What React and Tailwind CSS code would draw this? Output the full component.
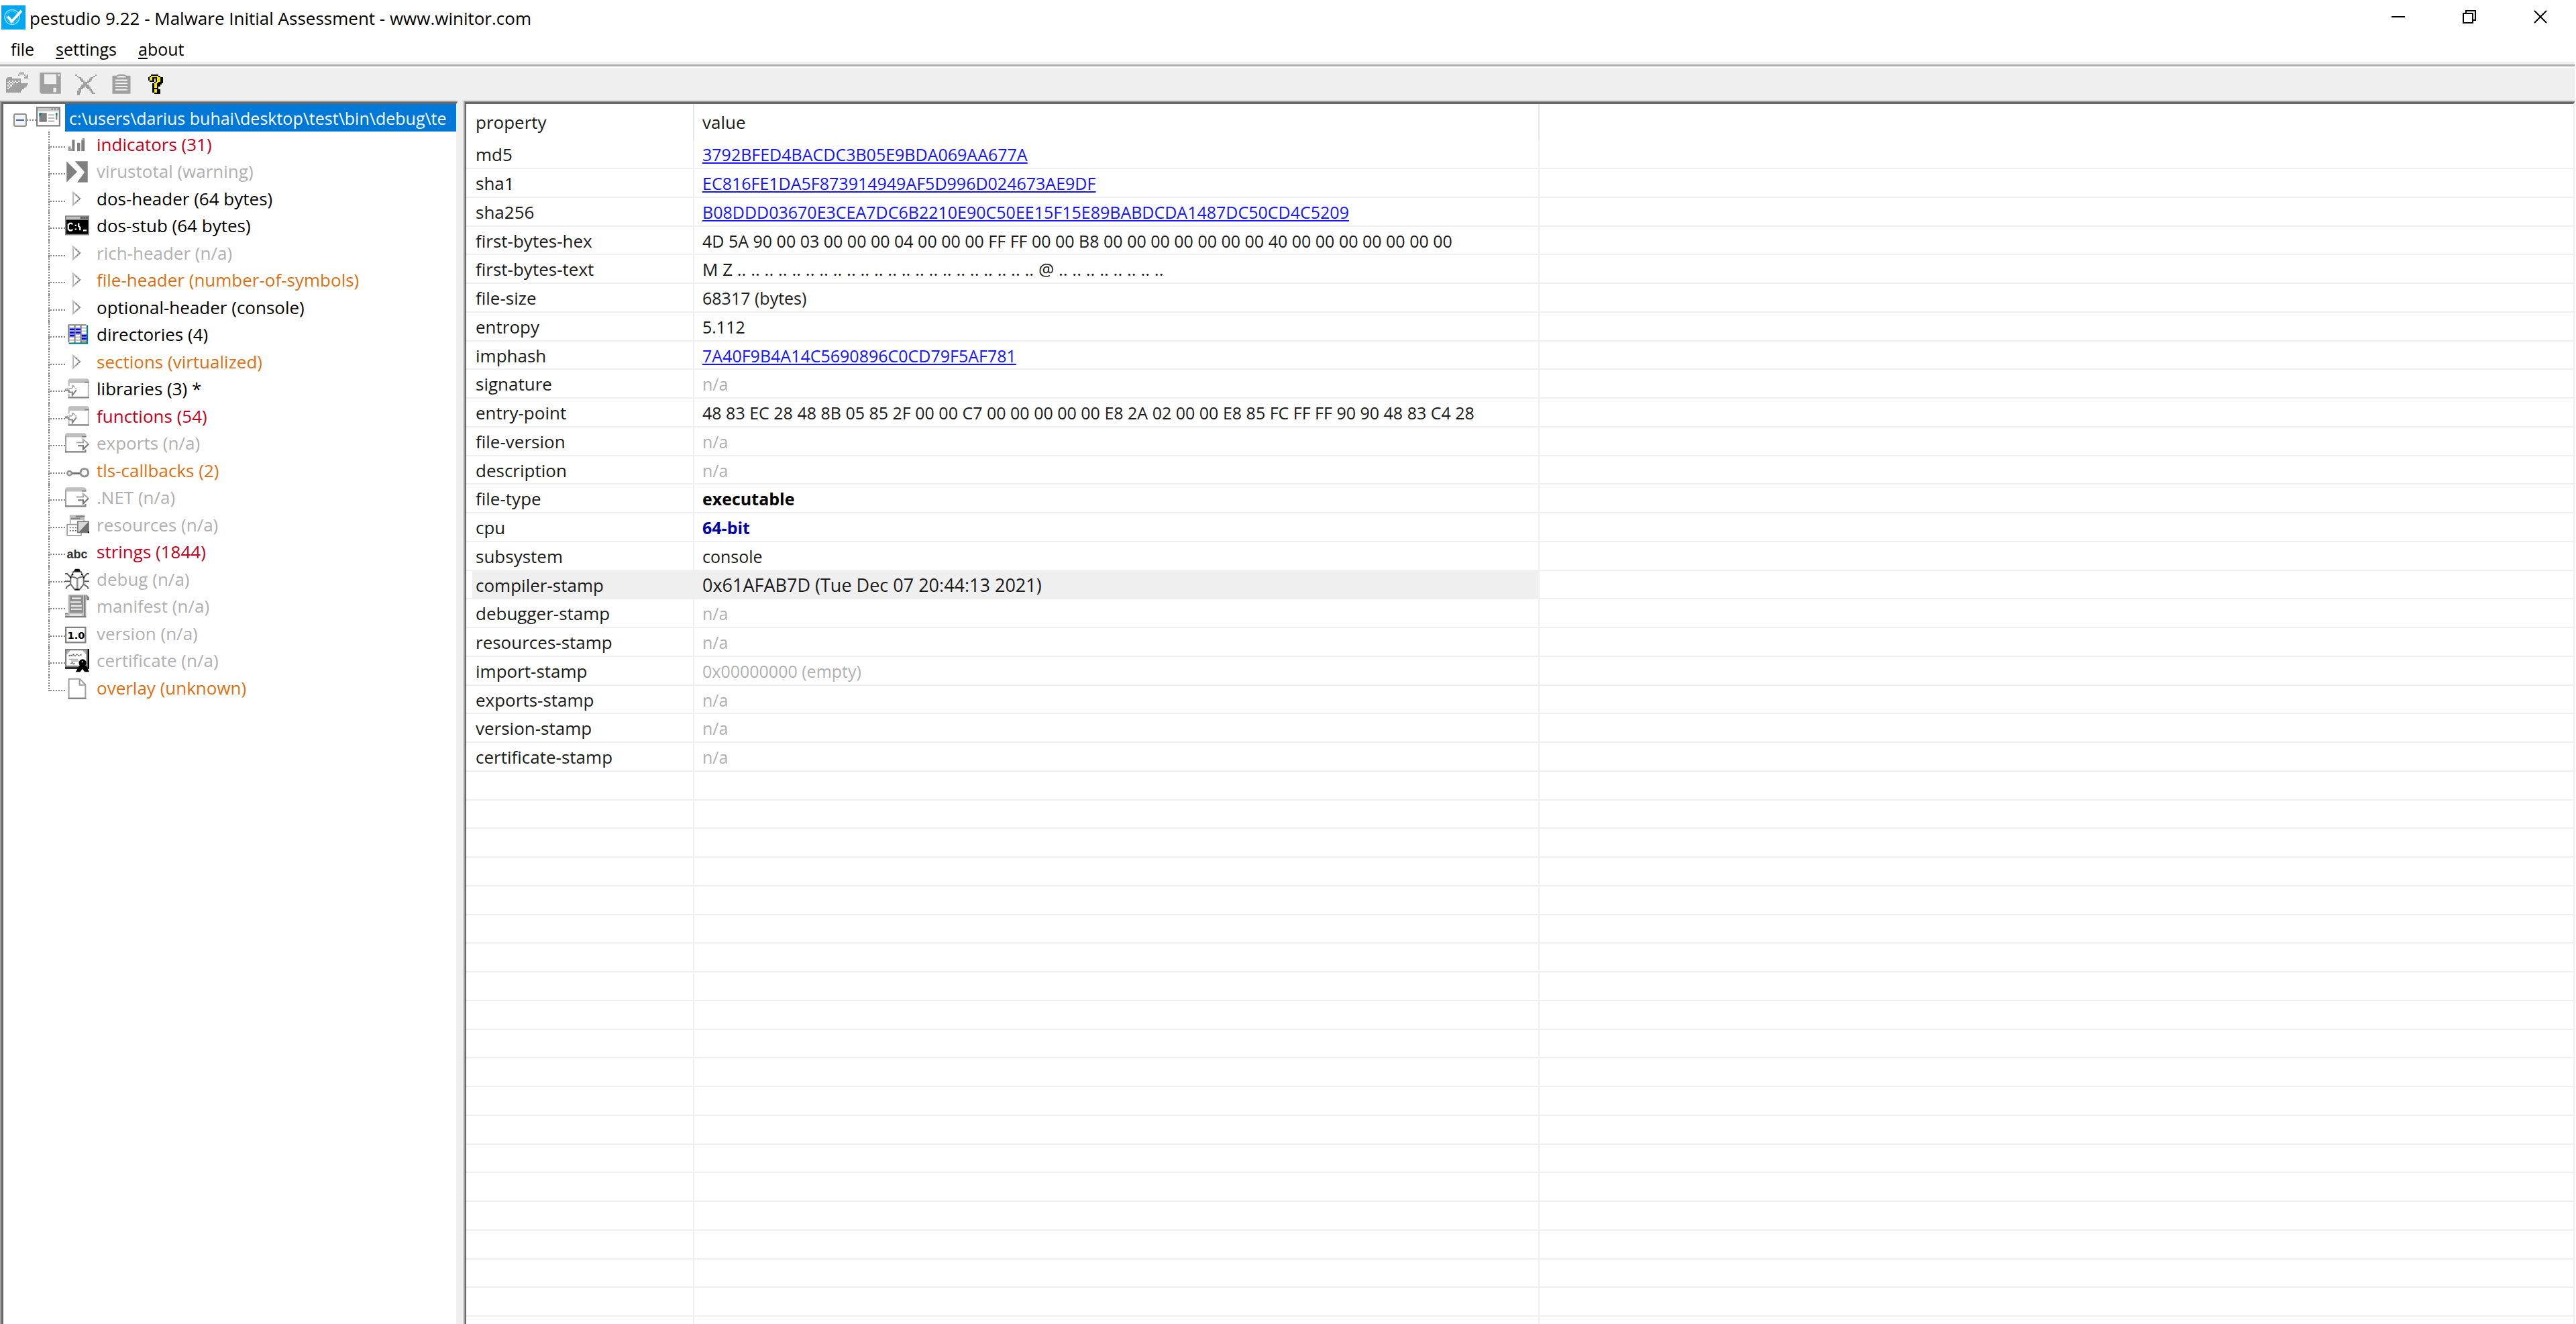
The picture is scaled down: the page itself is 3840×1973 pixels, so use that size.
const RED = "text-[#c00020]";
const GRAY = "text-[#b0b0b0]";
const ORANGE = "text-[#dd7010]";
const BLACK = "text-black";

function Icon({ children }) {
  return (
    <svg viewBox="0 0 16 16" className="block h-9 w-9 shrink-0 overflow-visible" fill="none" aria-hidden="true">
      {children}
    </svg>
  );
}

const PALETTE = { K: "#000000", Y: "#f4ea00", G: "#a0a0a0", D: "#808080", W: "#ffffff" };

/* Draws a small bitmap; each character is one pixel of the palette. */
function Pixels({ rows, x = 0, y = 0 }) {
  const rects = [];
  rows.forEach((row, j) => {
    let i = 0;
    while (i < row.length) {
      let n = 1;
      while (i + n < row.length && row[i + n] === row[i]) n++;
      if (PALETTE[row[i]]) {
        rects.push(<rect key={i + "-" + j} x={x + i} y={y + j} width={n} height={1} fill={PALETTE[row[i]]} />);
      }
      i += n;
    }
  });
  return <g shapeRendering="crispEdges">{rects}</g>;
}

const QUESTION = [
  "...KKKKK..",
  "..KYYYYYK.",
  ".KYYKKKYYKK",
  ".KYYK.KYYKK",
  "..KKK.KYYKK",
  ".....KYYKKK",
  "....KYYKKK.",
  "....KYYKK..",
  "....KYYK...",
  "....KKKK...",
  "....KYYKK..",
  "....KYYKK..",
  ".....KKKK..",
];

const DELETE = [
  "G............G",
  ".G..........G.",
  "..GG......GG..",
  "...GG....GG...",
  "....GG..GG....",
  ".....GGGG.....",
  ".....GGG......",
  "....GGGGG.....",
  "...GGG.GGG....",
  "..GGG...GG....",
  "..GG.....GG...",
  ".GGG......GG..",
  ".GG........GG.",
  ".GG...........",
];

const OPEN = [
  ".........GGG....",
  "........G...G.G.",
  ".............GG.",
  ".GGG........GGG.",
  "GGGGGGGGGG......",
  "GG.G.G.G.G......",
  "G.G.G.G.GG......",
  "GG.G.GGGGGGGGGG.",
  "G.G.GGGGGGGGGG..",
  "GG.GGGGGGGGGG...",
  "G.GGGGGGGGGG....",
  "GGGGGGGGGGG.....",
  "GGGGGGGGGG......",
];

function OpenIcon() {
  return <Icon><Pixels rows={OPEN} x={2} y={1} /></Icon>;
}
function SaveIcon() {
  return (
    <Icon>
      <path fill="#a0a0a0" fillRule="evenodd" d="M1 1h14v14H2l-1-1zM4 2v6.5h8V2zM13.2 2v1.2h1V2zM10 11v3h2v-3z" />
    </Icon>
  );
}
function DeleteIcon() {
  return <Icon><Pixels rows={DELETE} x={1} y={2} /></Icon>;
}
function ClipboardIcon() {
  return (
    <Icon>
      <path fill="#a0a0a0" fillRule="evenodd" d="M2 3h3v1.2h6V3h3v12H2zM4 5.6v.9h8v-.9zM4 7.7v.9h8v-.9zM4 9.8v.9h8v-.9zM4 11.9v.9h8v-.9z" />
      <path stroke="#a0a0a0" strokeWidth="1" d="M5 3.2l1.5-.6h3l1.5.6" />
    </Icon>
  );
}
function HelpIcon() {
  return <Icon><Pixels rows={QUESTION} x={1} y={2} /></Icon>;
}

function AppIcon() {
  return (
    <svg viewBox="0 0 36 36" className="h-9 w-9 shrink-0 bg-[#00a8f0]" fill="none" aria-hidden="true">
      <circle cx="16" cy="17.500" r="11" stroke="#8fdcff" strokeWidth="1.500" />
      <circle cx="16" cy="17.500" r="8.500" stroke="#5cc8fb" strokeWidth="1" />
      <path d="M9.500 16.500l6 7.500L30 8" stroke="#fff" strokeWidth="4" />
    </svg>
  );
}

function ImageFileIcon() {
  return (
    <Icon>
      <rect x="0.5" y="1.500" width="15" height="12" fill="#fff" stroke="#808080" />
      <path fill="#c8c8c8" d="M1 2h14v2H1z" />
      <path fill="#808080" d="M10 2h1v1h-1zM12 2h1v1h-1zM14 2h1v1h-1zM2 5h5v6H2z" />
      <path fill="#008080" d="M2 5h2L2 7.500z" />
      <path stroke="#b8b8b8" strokeWidth="0.900" d="M8 6.300h4M8 8.400h4M8 10.500h4" />
      <path fill="#808080" d="M13 5h1v4.500h-1z" />
      <path fill="#008080" d="M13 5h1v1.500h-1z" />
    </Icon>
  );
}
function BarsIcon() {
  return (
    <Icon>
      <path fill="#808080" d="M4.600 4.500h1.800V12H4.600zM8 6.500h2V12H8zM10.800 4.500h2.200V12h-2.200z" />
      <path fill="#a0a0a0" d="M2 9h1.800v3H2zM11.500 3.500H13V5h-1.500zM3.500 10.500h1.200V12H3.500z" />
    </Icon>
  );
}
function VirusIcon() {
  return (
    <Icon>
      <path fill="#808080" d="M1 1l7 7-7 7zM6.500 1h8.500v14H8l5-6.800z" />
    </Icon>
  );
}
function ArrowIcon() {
  return (
    <Icon>
      <path d="M5.400 3.500v8.200l4.400-4.200z" stroke="#b8b8b8" strokeWidth="0.900" />
      <path d="M7 5l2.800 2.500L7 10.200" stroke="#808080" strokeWidth="0.900" strokeDasharray="1.200 0.600" />
    </Icon>
  );
}
function ConsoleIcon() {
  return (
    <Icon>
      <path fill="#808080" d="M0 1h16v13H0z" />
      <path fill="#c0c0c0" d="M.7 1.700h9.300v1.600H.7z" />
      <path fill="#000" d="M.8 4h14.400v9.200H.8z" />
      <path fill="#505050" d="M10.500 2h1v1h-1zM12.300 2h1v1h-1zM14 2h1v1h-1z" />
      <path stroke="#fff" strokeWidth="1" d="M5 6.800l-.8-.6H3l-.9.900v2.800l.9.900h1.200l.8-.6M9 6v2l.9.800v2" />
      <path fill="#fff" d="M6.500 7h1v1h-1zM6.500 9.500h1v1h-1zM12 10.300h2.300v1H12z" />
    </Icon>
  );
}
function GridIcon() {
  return (
    <Icon>
      <path fill="#fff" d="M2 1h13v13H2z" />
      <path fill="#a0a0a0" d="M10.600 7.600h3.800v5.600h-3.800z" />
      <path stroke="#b8b8b8" strokeWidth="0.700" d="M2 3.400h12.500M2 5.500h12.500M2 7.600h12.500M2 9.500h12.500M2 11.500h12.500" />
      <path stroke="#808080" strokeWidth="0.900" d="M2.400 13V1.400H14M6.500 1v12.500M10.500 1v12.500" />
      <path stroke="#0000f0" strokeWidth="1.300" d="M3 4.400h3.200M7 4.400h3.200M3 6.500h3.200M7 6.500h3.200M3 8.500h3.200M11 8.500h3.200M11 10.500h3.200" />
      <path stroke="#008080" strokeWidth="1" d="M14.700 1.500v12.100H2.500" />
    </Icon>
  );
}
function ImportIcon() {
  return (
    <Icon>
      <path fill="#fff" d="M2 1h14v13H2z" />
      <path fill="#c0c0c0" d="M3 1h12l1 1v2H2V2zM2 4h1v2H2zM15 4h1v9h-1zM2 11h1v2H2z" />
      <path fill="#808080" d="M2 13h14v1H2zM13 3h3v.7h-3z" />
      <path d="M7.500 8.500L4.800 12v-2H2.500V8.700H0" stroke="#808080" strokeWidth="0.900" />
      <path d="M0 8.200l2.500-.7h2.300V5.200l2.700 2.600" stroke="#a8a8a8" strokeWidth="0.800" strokeDasharray="2 0.500" />
    </Icon>
  );
}
function ExportIcon() {
  return (
    <Icon>
      <path fill="#fff" d="M0 1h14v13H0z" />
      <path fill="#c0c0c0" d="M1 1h12l1 1v1.800H0V2z" />
      <path fill="#a0a0a0" d="M0 3h.9v11H0z" />
      <path fill="#808080" d="M0 13h14v1H0zM13 12h1v2h-1zM11 3h3v.8h-3z" />
      <path d="M7.500 7.300H12V5.200l3.400 3" fill="#fff" stroke="#a8a8a8" strokeWidth="0.900" />
      <path d="M8.500 9.400H12v2.400l3.500-3.500" fill="#fff" stroke="#707070" strokeWidth="0.900" />
    </Icon>
  );
}
function KeyIcon() {
  return (
    <Icon>
      <path d="M4 9.500h6" stroke="#707070" strokeWidth="1.300" />
      <circle cx="2.900" cy="9.400" r="1.500" fill="#e0e0e0" stroke="#909090" />
      <circle cx="12.800" cy="9" r="2.600" fill="#fff" stroke="#909090" strokeWidth="1.300" />
    </Icon>
  );
}
function ResourcesIcon() {
  return (
    <Icon>
      <path fill="#c0c0c0" d="M3 1h10v6H3z" />
      <path fill="#808080" d="M7 1.500h6v1H7zM4 3h6v.8H4z" />
      <path fill="#fff" d="M4 4.500h8v3H4z" />
      <path fill="#fff" stroke="#a0a0a0" strokeWidth="0.800" d="M1.400 7.400h9.200v7.200H1.400z" />
      <path stroke="#707070" strokeWidth="0.800" strokeDasharray="0.900 0.900" d="M3 9.500h6M3 11.500h6" />
      <path fill="#d8d8d8" stroke="#808080" strokeWidth="0.800" d="M8.400 5.400h7.200v7.200H8.400z" />
      <path fill="#707070" d="M15.500 5.500v7H9z" />
      <path fill="#000" d="M15 12h1v1h-1z" />
    </Icon>
  );
}
function AbcIcon() {
  return (
    <Icon>
      <text x="8" y="12" textAnchor="middle" fontSize="8" fontWeight="700" fontFamily="'Liberation Sans', sans-serif" fill="#303030">abc</text>
    </Icon>
  );
}
function BugIcon() {
  return (
    <Icon>
      <path d="M0 4h1.500l2 2.200M16 4h-1.500l-2 2.200M0 9h3.500M16 9h-3.500M.5 14l.8-1.500 2.400-1.500M15.500 14l-.8-1.500-2.400-1.500" stroke="#606060" strokeWidth="0.900" />
      <path d="M3.700 6.500L5.500 2.700h5l1.800 3.800v4.500l-2.800 3.500h-3l-2.800-3.500z" fill="#fff" stroke="#707070" strokeWidth="0.900" />
      <path d="M3.800 5.800l2.500.6 1.700.8 1.700-.8 2.500-.6M8 7v7" stroke="#707070" strokeWidth="0.900" />
      <path d="M7.500 7.500h1.200V14H7.500z" fill="#909090" />
      <path d="M6 1.500L6.800.8h2.500l.7.700v1H6zM4.500 4h1v1h-1zM10.600 4h1v1h-1zM6.500 14h3v.9h-3zM3.200 6h1v1h-1zM11.900 6h1v1h-1z" fill="#101010" />
    </Icon>
  );
}
function ManifestIcon() {
  return (
    <Icon>
      <path fill="#c0c0c0" d="M2 0h12.500l1.500 2v1.800h-2V15H0v-2.500h2z" />
      <path fill="#909090" d="M3 .6h9V12H3z" />
      <path fill="#808080" d="M12.500.5h1V14.500h-1zM14 0l2 2v1.500h-1.500zM0 12.200h2v.8H0zM0 14.200h14v1H0z" />
      <path stroke="#f0f0f0" strokeWidth="0.900" d="M4.500 2.500h6M3.500 5h7M4 7.500h7M4 9.700h7M3 13.500h8" />
    </Icon>
  );
}
function VersionIcon() {
  return (
    <Icon>
      <rect x="0.500" y="3.500" width="13" height="10" fill="#fff" stroke="#808080" />
      <text x="7.300" y="11" textAnchor="middle" fontSize="6.500" fontWeight="700" fontFamily="'DejaVu Sans', sans-serif" fill="#000">1.0</text>
    </Icon>
  );
}
function CertificateIcon() {
  return (
    <Icon>
      <path fill="#000" d="M0 0h16v13.200H0z" />
      <path fill="#808080" d="M0 0h15v12.200H0z" />
      <path fill="#fff" d="M3.500 1h8L14 3.500V11H1V3.500z" />
      <path fill="#b0b0b0" d="M1 1h2.500L1 3.500zM14 1v2.500L11.500 1z" />
      <path stroke="#606060" strokeWidth="0.800" strokeDasharray="1 0.500" d="M2.500 4.800l1-.8 1 .5 1.200-.8 1 .8 1.200-.8 1.200.8 1.200-.6 1 .6" />
      <path stroke="#a8a8a8" strokeWidth="0.600" d="M2.500 6.800h6M4 8h5" />
      <path stroke="#808080" strokeWidth="0.700" d="M3.500 9.700l1.500-.5.500.8 1-.4" />
      <circle cx="11.600" cy="9.300" r="2.500" fill="#000" />
      <path fill="#a0a0a0" d="M11 8h1v1h-1z" />
      <path fill="#000" d="M9.500 11h4.500l2 4.200h-3l-1.500-2-1.500 2H7z" />
    </Icon>
  );
}
function PageIcon() {
  return (
    <Icon>
      <path d="M2.500 1.700h7.300l3.700 3.800v9H2.500z" fill="#fff" stroke="#a0a0a0" strokeWidth="0.900" />
      <path d="M9.600 1.700v4h3.900" stroke="#a0a0a0" strokeWidth="0.900" />
      <path d="M2 14.600h12" stroke="#808080" strokeWidth="0.900" />
    </Icon>
  );
}

const TREE = [
  ["indicators (31)", RED, BarsIcon],
  ["virustotal (warning)", GRAY, VirusIcon],
  ["dos-header (64 bytes)", BLACK, ArrowIcon],
  ["dos-stub (64 bytes)", BLACK, ConsoleIcon],
  ["rich-header (n/a)", GRAY, ArrowIcon],
  ["file-header (number-of-symbols)", ORANGE, ArrowIcon],
  ["optional-header (console)", BLACK, ArrowIcon],
  ["directories (4)", BLACK, GridIcon],
  ["sections (virtualized)", ORANGE, ArrowIcon],
  ["libraries (3) *", BLACK, ImportIcon],
  ["functions (54)", RED, ImportIcon],
  ["exports (n/a)", GRAY, ExportIcon],
  ["tls-callbacks (2)", ORANGE, KeyIcon],
  [".NET (n/a)", GRAY, ExportIcon],
  ["resources (n/a)", GRAY, ResourcesIcon],
  ["strings (1844)", RED, AbcIcon],
  ["debug (n/a)", GRAY, BugIcon],
  ["manifest (n/a)", GRAY, ManifestIcon],
  ["version (n/a)", GRAY, VersionIcon],
  ["certificate (n/a)", GRAY, CertificateIcon],
  ["overlay (unknown)", ORANGE, PageIcon],
];

const ROWS = [
  ["md5", "3792BFED4BACDC3B05E9BDA069AA677A", "link"],
  ["sha1", "EC816FE1DA5F873914949AF5D996D024673AE9DF", "link"],
  ["sha256", "B08DDD03670E3CEA7DC6B2210E90C50EE15F15E89BABDCDA1487DC50CD4C5209", "link"],
  ["first-bytes-hex", "4D 5A 90 00 03 00 00 00 04 00 00 00 FF FF 00 00 B8 00 00 00 00 00 00 00 40 00 00 00 00 00 00 00"],
  ["first-bytes-text", "M Z .. .. .. .. .. .. .. .. .. .. .. .. .. .. .. .. .. .. .. .. .. .. @ .. .. .. .. .. .. .. ..", "wide"],
  ["file-size", "68317 (bytes)"],
  ["entropy", "5.112"],
  ["imphash", "7A40F9B4A14C5690896C0CD79F5AF781", "link"],
  ["signature", "n/a", "muted"],
  ["entry-point", "48 83 EC 28 48 8B 05 85 2F 00 00 C7 00 00 00 00 00 E8 2A 02 00 00 E8 85 FC FF FF 90 90 48 83 C4 28"],
  ["file-version", "n/a", "muted"],
  ["description", "n/a", "muted"],
  ["file-type", "executable", "bold"],
  ["cpu", "64-bit", "boldBlue"],
  ["subsystem", "console"],
  ["compiler-stamp", "0x61AFAB7D (Tue Dec 07 20:44:13 2021)", "selected"],
  ["debugger-stamp", "n/a", "muted"],
  ["resources-stamp", "n/a", "muted"],
  ["import-stamp", "0x00000000 (empty)", "muted"],
  ["exports-stamp", "n/a", "muted"],
  ["version-stamp", "n/a", "muted"],
  ["certificate-stamp", "n/a", "muted"],
];
const EMPTY_ROWS = 20;

const VALUE_STYLE = {
  plain: "text-[25px] text-[#1a1a1a]",
  wide: "text-[26px] text-[#1a1a1a]",
  muted: "text-[25px] text-[#b0b0b0]",
  bold: "text-[25px] font-bold text-black",
  boldBlue: "text-[25px] font-bold text-[#0000a8]",
  selected: "text-[27px] text-[#1a1a1a]",
  link: "text-[25px] text-[#1414ff] underline decoration-2 underline-offset-2",
};

function MenuItem({ first, rest, underline }) {
  return (
    <button type="button" className="flex px-4 text-[25px] leading-[42px]">
      <span className={underline ? "underline decoration-2 underline-offset-[3px]" : ""}>{first}</span>
      {rest}
    </button>
  );
}

function WindowButton({ label, children }) {
  return (
    <button type="button" aria-label={label} className="flex h-[50px] w-[106px] items-center justify-center">
      <svg viewBox="0 0 20 20" className="h-5 w-5" fill="none" stroke="#000" strokeWidth="2" aria-hidden="true">
        {children}
      </svg>
    </button>
  );
}

function Tree() {
  return (
    <aside className="flex w-[682px] shrink-0 border-l-2 border-t-2 border-[#a0a0a0] bg-white">
      <nav aria-label="file parts" className="min-w-0 flex-1 border-l-[3px] border-r-2 border-t-[3px] border-[#696969] border-r-[#f0f0f0]">
        <div className="flex h-[41px] items-start">
          <button
            type="button"
            aria-label="collapse"
            className="mt-[14px] ml-[15px] flex h-5 w-5 shrink-0 items-center justify-center rounded-[3px] border-2 border-[#909090] bg-[#f4f4f4]"
          >
            <span className="h-[2px] w-3 bg-[#4560b8]" />
          </button>
          <span className="mt-[23px] w-[14px] shrink-0 border-t-2 border-dotted border-[#808080]" />
          <span className="mt-[2px] shrink-0"><ImageFileIcon /></span>
          <button
            type="button"
            className="ml-[7px] h-[41px] min-w-0 flex-1 overflow-hidden bg-[#0078d7] pl-[6px] text-left text-[25px] leading-[38px] whitespace-nowrap text-white"
          >
            {"c:\\users\\darius buhai\\desktop\\test\\bin\\debug\\te"}
          </button>
        </div>
        <ul>
          {TREE.map(([label, color, Glyph], i) => (
            <li key={label} className="flex pl-[67px] odd:h-[40px] even:h-[41px]">
              <span className="flex w-[25px] shrink-0 flex-col">
                <span className="h-[24px] border-b-2 border-l-2 border-dotted border-[#808080]" />
                {i < TREE.length - 1 && <span className="flex-1 border-l-2 border-dotted border-[#808080]" />}
              </span>
              <span className="mt-[2px] shrink-0"><Glyph /></span>
              <button type="button" className={"mb-[3px] ml-[11px] text-[26px] leading-9 whitespace-nowrap " + color}>
                {label}
              </button>
            </li>
          ))}
        </ul>
      </nav>
    </aside>
  );
}

function Properties() {
  const line = "border-b-2 border-[#f0f0f0] p-0 align-top whitespace-nowrap leading-[42px] ";
  return (
    <section className="ml-[9px] flex min-w-0 flex-1 border-l-2 border-t-2 border-[#a0a0a0] bg-white">
      <div className="min-w-0 flex-1 overflow-hidden border-l-2 border-t-[3px] border-r-2 border-[#696969] border-r-[#f0f0f0]">
        <table className="w-full table-fixed border-separate border-spacing-0 text-left">
          <colgroup>
            <col className="w-[340px]" />
            <col className="w-[1260px]" />
            <col />
          </colgroup>
          <thead>
            <tr className="h-[54px] text-[26px] text-[#1a1a1a]">
              <th scope="col" className="border-r-2 border-[#e5e5e5] p-0 pl-[14px] font-normal">property</th>
              <th scope="col" className="border-r-2 border-[#e5e5e5] p-0 pl-[12px] font-normal">value</th>
              <td />
            </tr>
          </thead>
          <tbody>
            {ROWS.map(([name, value, kind = "plain"]) => (
              <tr key={name} className="h-[43px] nth-[4n]:h-[42px]">
                <th
                  scope="row"
                  className={
                    line +
                    "pl-[14px] text-[26px] font-normal text-[#1a1a1a] " +
                    (kind === "selected" ? "bg-[linear-gradient(to_right,#fff_9px,#efefef_9px)]" : "border-r-2")
                  }
                >
                  <div className="h-[40px] leading-[42px]">{name}</div>
                </th>
                <td className={line + "border-r-2 pl-[12px] " + (kind === "selected" ? "bg-[#efefef]" : "")}>
                  <div className="h-[40px] leading-[42px]">
                    {kind === "link" ? (
                      <a href="#lookup" className={VALUE_STYLE[kind]}>{value}</a>
                    ) : (
                      <span className={VALUE_STYLE[kind]}>{value}</span>
                    )}
                  </div>
                </td>
                <td className={line} />
              </tr>
            ))}
            {Array.from({ length: EMPTY_ROWS }, (_, i) => (
              <tr key={i} className="h-[43px] nth-[4n]:h-[42px]">
                <td className={line + "border-r-2"} />
                <td className={line + "border-r-2"} />
                <td className={line} />
              </tr>
            ))}
          </tbody>
        </table>
      </div>
    </section>
  );
}

export default function App() {
  return (
    <div className="flex h-screen flex-col overflow-hidden bg-white font-['Open_Sans','Noto_Sans',sans-serif] text-black">
      <header className="flex h-[52px] shrink-0 items-center pl-[2px]">
        <AppIcon />
        <h1 className="ml-[6px] flex-1 pt-[2px] text-[26px] leading-9 font-normal">
          pestudio 9.22 - Malware Initial Assessment - www.winitor.com
        </h1>
        <div className="flex h-full">
          <WindowButton label="Minimize"><path d="M0 10h20" /></WindowButton>
          <WindowButton label="Restore"><path d="M1 5h14v14H1zM5 5V1h14v14h-4" /></WindowButton>
          <WindowButton label="Close"><path d="M1 1l18 18M19 1L1 19" /></WindowButton>
        </div>
      </header>
      <nav aria-label="menu" className="flex h-[40px] shrink-0">
        <MenuItem first="f" rest="ile" />
        <MenuItem first="s" rest="ettings" underline />
        <MenuItem first="a" rest="bout" underline />
      </nav>
      <div className="mr-[2px] h-[7px] shrink-0 border-b-[3px] border-[#b0b0b0] bg-[#f0f0f0]" />
      <div role="toolbar" aria-label="actions" className="mr-[2px] flex h-[51px] shrink-0 items-start gap-[17px] border-t-2 border-white bg-[#efefef] pt-[5px] pl-[4px]">
        <button type="button" aria-label="open" disabled><OpenIcon /></button>
        <button type="button" aria-label="save" disabled><SaveIcon /></button>
        <button type="button" aria-label="close file" disabled><DeleteIcon /></button>
        <button type="button" aria-label="copy" disabled><ClipboardIcon /></button>
        <button type="button" aria-label="help"><HelpIcon /></button>
      </div>
      <main className="mr-[2px] flex min-h-0 flex-1 bg-[#efefef]">
        <Tree />
        <Properties />
      </main>
    </div>
  );
}
